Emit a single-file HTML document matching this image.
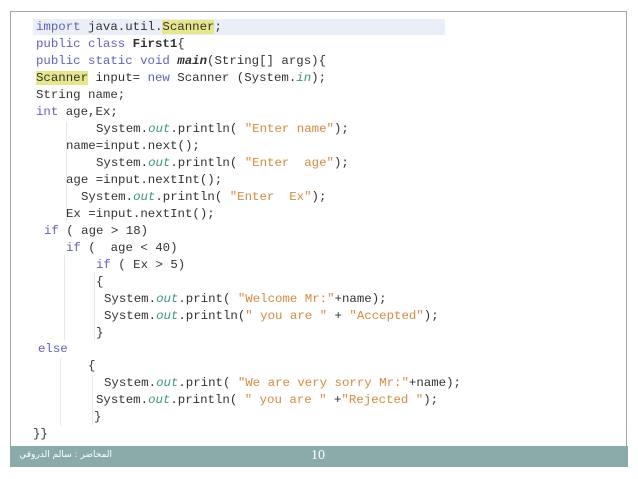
<!DOCTYPE html>
<html><head><meta charset="utf-8"><style>
body{margin:0;width:638px;height:479px;background:#fff;position:relative;overflow:hidden;font-family:"Liberation Mono",monospace;}
.box{position:absolute;left:10px;top:11px;width:617px;height:456px;border:1px solid #9aa8a8;box-sizing:border-box;}
.ft{position:absolute;left:10px;top:446px;width:618px;height:21px;background:#8aabaa;}
.l{position:absolute;font-size:12.4px;line-height:17px;color:#333;white-space:pre;}
.k{color:#6060c8}.s{color:#d88a3a}.o{color:#3a9a7a;font-style:italic}
.hl{background:#e6e68a}
.g{position:absolute;width:1px;background:#e8e8e8;}
</style></head><body>
<div class="box"></div>
<div style="position:absolute;left:33px;top:19px;width:412px;height:16px;background:#e9eef7"></div>
<div class="g" style="left:66px;top:122px;height:100px"></div>
<div class="g" style="left:64px;top:255px;height:85px"></div>
<div class="g" style="left:94px;top:272px;height:68px"></div>
<div class="g" style="left:60px;top:358px;height:68px"></div>
<div class="g" style="left:92px;top:375px;height:50px"></div>
<div class="l" style="left:36px;top:19px"><span class="k">import</span> java.util.<span class="hl">Scanner</span>;</div>
<div class="l" style="left:36px;top:36px"><span class="k">public class</span> <b>First1</b>{</div>
<div class="l" style="left:36px;top:53px"><span class="k">public static void</span> <b><i>main</i></b>(String[] args){</div>
<div class="l" style="left:36px;top:70px"><span class="hl">Scanner</span> input= <span class="k">new</span> Scanner (System.<span class="o">in</span>);</div>
<div class="l" style="left:36px;top:87px">String name;</div>
<div class="l" style="left:36px;top:104px"><span class="k">int</span> age,Ex;</div>
<div class="l" style="left:96px;top:121px">System.<span class="o">out</span>.println( <span class="s">"Enter name"</span>);</div>
<div class="l" style="left:66px;top:138px">name=input.next();</div>
<div class="l" style="left:96px;top:155px">System.<span class="o">out</span>.println( <span class="s">"Enter  age"</span>);</div>
<div class="l" style="left:66px;top:172px">age =input.nextInt();</div>
<div class="l" style="left:81px;top:189px">System.<span class="o">out</span>.println( <span class="s">"Enter  Ex"</span>);</div>
<div class="l" style="left:66px;top:206px">Ex =input.nextInt();</div>
<div class="l" style="left:44px;top:223px"><span class="k">if</span> ( age &gt; 18)</div>
<div class="l" style="left:66px;top:240px"><span class="k">if</span> (  age &lt; 40)</div>
<div class="l" style="left:96px;top:257px"><span class="k">if</span> ( Ex &gt; 5)</div>
<div class="l" style="left:96px;top:274px">{</div>
<div class="l" style="left:104px;top:291px">System.<span class="o">out</span>.print( <span class="s">"Welcome Mr:"</span>+name);</div>
<div class="l" style="left:104px;top:308px">System.<span class="o">out</span>.println(<span class="s">" you are "</span> + <span class="s">"Accepted"</span>);</div>
<div class="l" style="left:96px;top:325px">}</div>
<div class="l" style="left:38px;top:341px"><span class="k">else</span></div>
<div class="l" style="left:88px;top:358px">{</div>
<div class="l" style="left:104px;top:375px">System.<span class="o">out</span>.print( <span class="s">"We are very sorry Mr:"</span>+name);</div>
<div class="l" style="left:96px;top:392px">System.<span class="o">out</span>.println( <span class="s">" you are "</span> +<span class="s">"Rejected "</span>);</div>
<div class="l" style="left:94px;top:409px">}</div>
<div class="l" style="left:33px;top:426px">}}</div>
<div class="ft"></div>
<div style="position:absolute;left:20px;top:450px;font-family:'DejaVu Sans',sans-serif;font-size:9px;color:#fff;direction:rtl;width:92px;text-align:right;white-space:nowrap">المحاضر : سالم الدروقي</div>
<div style="position:absolute;left:311px;top:448px;font-family:'Liberation Serif',serif;font-size:14px;color:#fff">10</div>
</body></html>
